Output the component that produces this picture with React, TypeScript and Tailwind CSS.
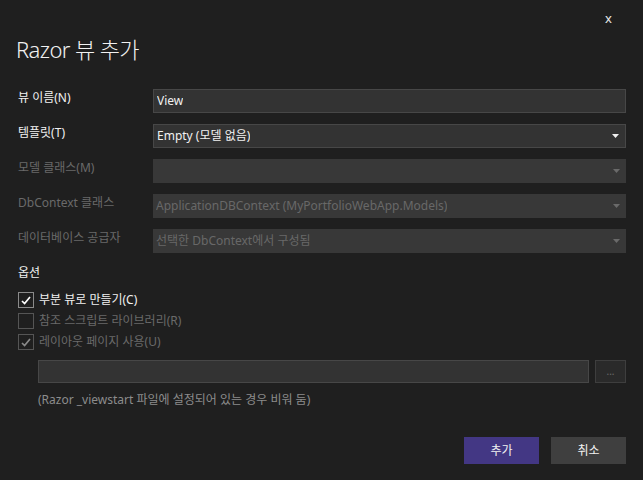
import { useState } from "react";

const fontStack = '"Noto Sans", "Noto Sans CJK KR", sans-serif';

function Arrow({ disabled }: { disabled?: boolean }) {
  return (
    <svg width="7" height="4" viewBox="0 0 7 4" className="shrink-0">
      <path d="M0 0 H7 L3.5 4 Z" fill={disabled ? "#6a6a6a" : "#f1f1f1"} />
    </svg>
  );
}

function Field({ value, enabled, dropdown }: { value: string; enabled?: boolean; dropdown?: boolean }) {
  return (
    <div
      className={
        "h-[24px] flex items-center justify-between pl-[3px] pr-[6px] text-[12px] " +
        (enabled ? "bg-[#333333] border border-[#474747] text-[#f1f1f1]" : "bg-[#383838] text-[#686868]")
      }
    >
      <span className="truncate">{value}</span>
      {dropdown && <Arrow disabled={!enabled} />}
    </div>
  );
}

function Check({ checked, disabled, label }: { checked: boolean; disabled?: boolean; label: string }) {
  return (
    <div className="flex items-center h-[16px] gap-[5px]">
      <div
        className={
          "w-[16px] h-[16px] border flex items-center justify-center " +
          (disabled ? "border-[#555555]" : "border-[#8a8a8a]")
        }
      >
        {checked && (
          <svg width="10" height="9" viewBox="0 0 10 9">
            <path d="M1 5 L3.6 7.6 L9 1" fill="none" stroke={disabled ? "#8a8a8a" : "#ffffff"} strokeWidth="1.7" />
          </svg>
        )}
      </div>
      <span className={"text-[12px] " + (disabled ? "text-[#6a6a6a]" : "text-[#f1f1f1]")}>{label}</span>
    </div>
  );
}

export default function App() {
  const [partial] = useState(true);

  const rows = [
    { label: "뷰 이름(N)", value: "View", enabled: true, dropdown: false },
    { label: "템플릿(T)", value: "Empty (모델 없음)", enabled: true, dropdown: true },
    { label: "모델 클래스(M)", value: "", enabled: false, dropdown: true },
    { label: "DbContext 클래스", value: "ApplicationDBContext (MyPortfolioWebApp.Models)", enabled: false, dropdown: true },
    { label: "데이터베이스 공급자", value: "선택한 DbContext에서 구성됨", enabled: false, dropdown: true },
  ];

  return (
    <div className="w-[643px] h-[480px] bg-[#1f1f1f] text-[#f1f1f1] overflow-hidden" style={{ fontFamily: fontStack }}>
      <div className="flex justify-end h-[30px] pt-[10px] pr-[31px]">
        <span className="text-[13px] leading-[16px] text-[#e8e8e8]">x</span>
      </div>

      <div className="px-[16px] mt-[4px] text-[22px] font-light leading-[30px] tracking-[-0.6px] text-[#f1f1f1]">
        Razor 뷰 추가
      </div>

      <div className="mt-[25px] pl-[18px] grid grid-cols-[135px_473px] gap-y-[11px]">
        {rows.map((r) => (
          <div key={r.label} className="contents">
            <div className={"h-[24px] flex items-center text-[12px] " + (r.enabled ? "text-[#f1f1f1]" : "text-[#6a6a6a]")}>
              <span className="-mt-[6px]">{r.label}</span>
            </div>
            <Field value={r.value} enabled={r.enabled} dropdown={r.dropdown} />
          </div>
        ))}
      </div>

      <div className="mt-[12px] pl-[18px] text-[12px] leading-[16px]">옵션</div>

      <div className="mt-[11px] pl-[18px] flex flex-col gap-[5px]">
        <Check checked={partial} label="부분 뷰로 만들기(C)" />
        <Check checked={false} disabled label="참조 스크립트 라이브러리(R)" />
        <Check checked disabled label="레이아웃 페이지 사용(U)" />
      </div>

      <div className="mt-[10px] pl-[38px] flex gap-[6px]">
        <div className="w-[551px] h-[23px] bg-[#333333] border border-[#474747]" />
        <div className="w-[31px] h-[23px] bg-[#2a2a2a] border border-[#3e3e3e] flex items-center justify-center text-[10px] text-[#6a6a6a]">
          ...
        </div>
      </div>

      <div className="mt-[9px] pl-[38px] text-[12px] leading-[16px] text-[#8c8c8c]">
        (Razor _viewstart 파일에 설정되어 있는 경우 비워 둠)
      </div>

      <div className="mt-[29px] pr-[17px] flex justify-end gap-[12px]">
        <button className="w-[75px] h-[27px] bg-[#433784] text-[12px] text-[#f1f1f1]">추가</button>
        <button className="w-[75px] h-[27px] bg-[#3f3f3f] text-[12px] text-[#f1f1f1]">취소</button>
      </div>
    </div>
  );
}
